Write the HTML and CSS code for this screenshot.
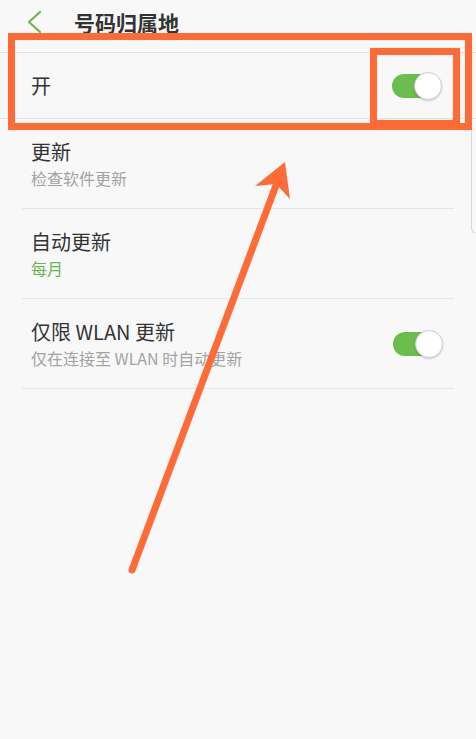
FILE: index.html
```html
<!DOCTYPE html>
<html lang="zh-CN">
<head>
<meta charset="utf-8">
<title>号码归属地</title>
<link rel="stylesheet" href="styles.css">
</head>
<body>
<div class="screen">
  <header class="topbar">
    <svg class="back" width="18" height="24" viewBox="0 0 18 24" aria-hidden="true">
      <polyline points="14,2 3,12 14,22" fill="none" stroke="#6cb554" stroke-width="2.2" stroke-linecap="round" stroke-linejoin="round"/>
    </svg>
    <h1 class="title">号码归属地</h1>
  </header>

  <div class="main-row">
    <span class="main-label">开</span>
    <span class="switch"><span class="knob"></span></span>
  </div>

  <div class="list">
    <div class="item">
      <div class="text">
        <div class="item-title">更新</div>
        <div class="item-sub">检查软件更新</div>
      </div>
    </div>
    <div class="item">
      <div class="text">
        <div class="item-title">自动更新</div>
        <div class="item-sub green">每月</div>
      </div>
    </div>
    <div class="item">
      <div class="text">
        <div class="item-title">仅限 WLAN 更新</div>
        <div class="item-sub">仅在连接至 WLAN 时自动更新</div>
      </div>
      <span class="switch"><span class="knob"></span></span>
    </div>
  </div>

  <div class="edge"></div>

  <svg class="annot" width="476" height="739" viewBox="0 0 476 739" aria-hidden="true">
    <rect x="11.5" y="36.5" width="457" height="90" fill="none" stroke="#ff6b36" stroke-width="7"/>
    <rect x="373.5" y="51.5" width="83" height="72" fill="none" stroke="#ff6b36" stroke-width="7"/>
    <line x1="132" y1="570" x2="278" y2="180" stroke="#ff6b36" stroke-width="7" stroke-linecap="round"/>
    <polygon points="285,162 255,186 276,184 290,199" fill="#ff6b36"/>
  </svg>
</div>
</body>
</html>
```

FILE: styles.css
```css
* {
  box-sizing: border-box;
}

html, body {
  margin: 0;
  padding: 0;
  background: #f8f8f8;
}

body {
  font-family: "Noto Sans CJK SC", "Noto Sans", sans-serif;
  color: #333333;
}

.screen {
  position: relative;
  width: 476px;
  height: 739px;
  overflow: hidden;
  background: #f8f8f8;
}

.topbar {
  height: 53px;
  display: flex;
  align-items: center;
  padding-left: 26px;
  border-bottom: 1px solid #e3e3e3;
}

.back {
  display: block;
  margin-top: -8px;
}

.title {
  margin: 0 0 0 30px;
  margin-top: -8px;
  font-size: 21px;
  font-weight: 700;
  color: #333333;
  line-height: 28px;
}

.main-row {
  height: 66px;
  display: flex;
  align-items: center;
  justify-content: space-between;
  padding: 0 34px 0 31px;
  border-bottom: 1px solid #e3e3e3;
}

.main-label {
  font-size: 20px;
  line-height: 26px;
  color: #333333;
}

.list {
  margin: 0 22px;
}

.item {
  display: flex;
  align-items: center;
  justify-content: space-between;
  padding: 20px 11px 20px 9px;
  border-bottom: 1px solid #e6e6e6;
}

.item-title {
  font-size: 20px;
  line-height: 26px;
  color: #333333;
}

.item-sub {
  margin-top: 3px;
  font-size: 16px;
  line-height: 20px;
  color: #a3a3a3;
}

.item-sub.green {
  color: #6cb554;
}

.switch {
  position: relative;
  display: block;
  width: 50px;
  height: 28px;
}

.switch::before {
  content: "";
  position: absolute;
  left: 0;
  top: 2px;
  width: 46px;
  height: 24px;
  border-radius: 12px;
  background: #6cbd4f;
}

.knob {
  position: absolute;
  right: 0;
  top: 0;
  width: 28px;
  height: 28px;
  border-radius: 50%;
  background: #ffffff;
  border: 1px solid #cfcfcf;
  box-shadow: 0 1px 2px rgba(0, 0, 0, 0.18);
}

.edge {
  position: absolute;
  left: 471px;
  top: 40px;
  width: 10px;
  height: 194px;
  border-left: 1px solid #d8d8d8;
  border-bottom: 1px solid #d8d8d8;
  border-bottom-left-radius: 6px;
}

.annot {
  position: absolute;
  left: 0;
  top: 0;
  pointer-events: none;
}
```
